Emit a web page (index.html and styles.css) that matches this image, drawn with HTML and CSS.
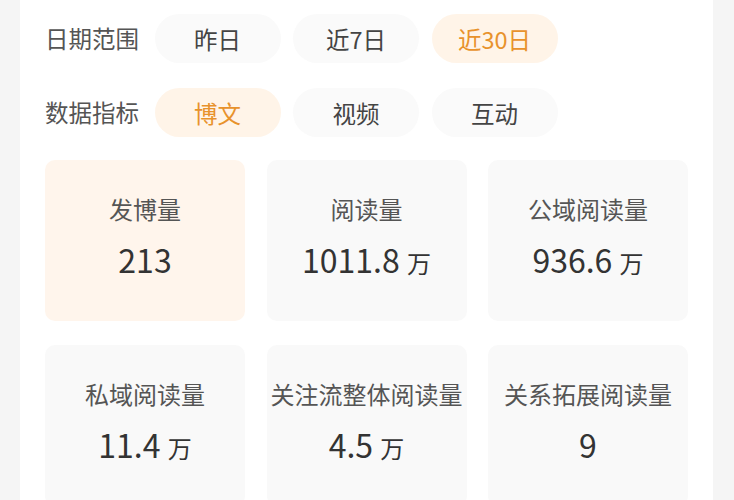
FILE: index.html
```html
<!DOCTYPE html>
<html lang="zh-CN">
<head>
<meta charset="utf-8">
<link rel="stylesheet" href="styles.css">
</head>
<body>
<div class="panel">
  <div class="filter-row">
    <span class="filter-label">日期范围</span>
    <span class="chip">昨日</span>
    <span class="chip">近7日</span>
    <span class="chip active">近30日</span>
  </div>
  <div class="filter-row last">
    <span class="filter-label">数据指标</span>
    <span class="chip active">博文</span>
    <span class="chip">视频</span>
    <span class="chip">互动</span>
  </div>
  <div class="cards">
    <div class="card active"><div class="card-label">发博量</div><div class="card-value">213</div></div>
    <div class="card"><div class="card-label">阅读量</div><div class="card-value">1011.8 <span class="unit">万</span></div></div>
    <div class="card"><div class="card-label">公域阅读量</div><div class="card-value">936.6 <span class="unit">万</span></div></div>
    <div class="card"><div class="card-label">私域阅读量</div><div class="card-value">11.4 <span class="unit">万</span></div></div>
    <div class="card"><div class="card-label">关注流整体阅读量</div><div class="card-value">4.5 <span class="unit">万</span></div></div>
    <div class="card"><div class="card-label">关系拓展阅读量</div><div class="card-value">9</div></div>
  </div>
</div>
</body>
</html>
```
FILE: styles.css
```css
html, body {
  margin: 0;
  padding: 0;
  background: #f5f5f5;
  font-family: "Noto Sans CJK SC", "Noto Sans", sans-serif;
  height: 500px;
  overflow: hidden;
}
.panel {
  margin-left: 20px;
  width: 693px;
  min-height: 520px;
  background: #ffffff;
  box-sizing: border-box;
  padding: 14px 25px 0 25px;
}
.filter-row {
  display: flex;
  align-items: center;
  gap: 12.5px;
  margin-bottom: 25px;
}
.filter-row.last {
  margin-bottom: 23px;
}
.filter-label {
  width: 97px;
  font-size: 23.5px;
  color: #555555;
  line-height: 1;
}
.chip {
  width: 126px;
  height: 49px;
  border-radius: 25px;
  background: #fafafa;
  color: #444444;
  font-size: 23.5px;
  display: flex;
  align-items: center;
  justify-content: center;
}
.chip.active {
  background: #fff4e8;
  color: #e8922c;
}
.cards {
  display: grid;
  grid-template-columns: repeat(3, 200px);
  column-gap: 21.5px;
  row-gap: 24px;
}
.card {
  height: 161px;
  border-radius: 10px;
  background: #f9f9f9;
  display: flex;
  flex-direction: column;
  align-items: center;
  padding-top: 32px;
  box-sizing: border-box;
}
.card.active {
  background: #fff5ec;
}
.card-label {
  font-size: 24px;
  line-height: 34px;
  color: #555555;
}
.card-value {
  margin-top: 11px;
  font-size: 32px;
  line-height: 44px;
  color: #333333;
}
.unit {
  font-size: 24px;
}
```
